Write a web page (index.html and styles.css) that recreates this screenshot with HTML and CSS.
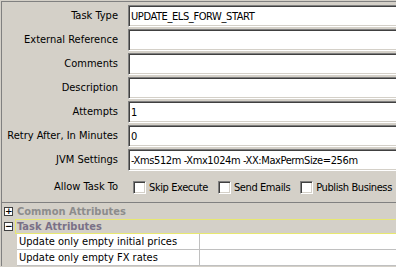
FILE: index.html
```html
<!DOCTYPE html>
<html lang="en">
<head>
  <meta charset="UTF-8">
  <title>Task Properties</title>
  <link rel="stylesheet" href="styles.css">
</head>
<body>
  <div class="panel">
    <div class="form">
      <label class="lbl">Task Type</label>
      <div class="field">UPDATE_ELS_FORW_START</div>
      <label class="lbl">External Reference</label>
      <div class="field"></div>
      <label class="lbl">Comments</label>
      <div class="field"></div>
      <label class="lbl">Description</label>
      <div class="field"></div>
      <label class="lbl">Attempts</label>
      <div class="field">1</div>
      <label class="lbl">Retry After, In Minutes</label>
      <div class="field">0</div>
      <label class="lbl">JVM Settings</label>
      <div class="field">-Xms512m -Xmx1024m -XX:MaxPermSize=256m</div>
      <label class="lbl allow">Allow Task To</label>
      <div class="checks">
        <span class="check"><span class="box"></span>Skip Execute</span>
        <span class="check"><span class="box"></span>Send Emails</span>
        <span class="check"><span class="box"></span>Publish Business</span>
      </div>
    </div>

    <div class="props">
      <div class="group">
        <span class="toggle">+</span>
        <span class="group-title">Common Attributes</span>
      </div>
      <div class="group open">
        <span class="toggle">&minus;</span>
        <span class="group-title selected">Task Attributes</span>
      </div>
      <div class="rows">
        <div class="row"><span class="name">Update only empty initial prices</span><span class="value"></span></div>
        <div class="row"><span class="name">Update only empty FX rates</span><span class="value"></span></div>
      </div>
    </div>
  </div>
</body>
</html>
```

FILE: styles.css
```css
html, body {
  margin: 0;
  padding: 0;
  overflow: hidden;
}

body {
  background: #d4d0c8;
  font-family: 'DejaVu Sans Condensed', 'Liberation Sans', sans-serif;
  font-size: 11px;
  color: #000;
  width: 396px;
  height: 267px;
}

.panel {
  margin: 1px 0 0 1px;
  border-top: 1px solid #808080;
  border-left: 1px solid #808080;
  height: 265px;
  box-sizing: border-box;
}

.form {
  display: grid;
  grid-template-columns: 116px 290px;
  column-gap: 10px;
  row-gap: 2px;
  padding-top: 3px;
}

.lbl {
  text-align: right;
  line-height: 22px;
  white-space: nowrap;
}

.field {
  height: 22px;
  box-sizing: border-box;
  background: #fff;
  border-top: 1px solid #808080;
  border-left: 1px solid #808080;
  border-right: 1px solid #fff;
  border-bottom: 1px solid #fff;
  box-shadow: inset 1px 1px 0 #404040, inset -1px -1px 0 #d4d0c8;
  padding: 0 2px;
  line-height: 21px;
  letter-spacing: -0.4px;
  white-space: nowrap;
  overflow: hidden;
}

.allow {
  margin-top: 3px;
}

.checks {
  display: flex;
  align-items: center;
  gap: 10px;
  margin-top: 3px;
  padding-left: 5px;
  letter-spacing: -0.4px;
  white-space: nowrap;
}

.check {
  display: flex;
  align-items: center;
  gap: 3px;
}

.box {
  width: 13px;
  height: 13px;
  box-sizing: border-box;
  background: #fff;
  border-top: 1px solid #808080;
  border-left: 1px solid #808080;
  border-right: 1px solid #fff;
  border-bottom: 1px solid #fff;
  box-shadow: inset 1px 1px 0 #404040, inset -1px -1px 0 #d4d0c8;
}

.props {
  margin-top: 4px;
  border-top: 1px solid #808080;
}

.group {
  display: flex;
  align-items: center;
  height: 15px;
}

.group:first-child {
  height: 16px;
}

.toggle {
  width: 9px;
  height: 9px;
  box-sizing: border-box;
  border: 1px solid #404040;
  background: #fff;
  margin: 0 4px 0 2px;
  font-family: 'DejaVu Sans', sans-serif;
  font-size: 9px;
  line-height: 7px;
  text-align: center;
  font-weight: bold;
  color: #000;
}

.group-title {
  font-weight: bold;
  color: #8c8c8c;
  flex: 1;
  line-height: 13px;
}

.group-title.selected {
  color: #7a7087;
  border: 1px solid #e8e870;
  border-right: none;
  margin-left: -2px;
  padding-left: 1px;
}

.rows {
  margin-left: 15px;
  background: #fff;
}

.row {
  display: grid;
  grid-template-columns: 183px 1fr;
  height: 16px;
  border-bottom: 1px solid #c0c0c0;
  box-sizing: border-box;
}

.name {
  padding-left: 2px;
  line-height: 15px;
  border-right: 1px solid #c0c0c0;
  white-space: nowrap;
}
```
